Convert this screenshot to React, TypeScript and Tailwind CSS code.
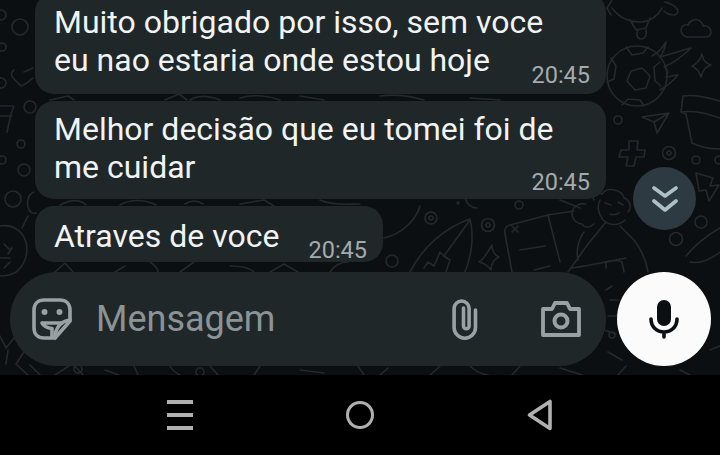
import React from 'react';

const font = { fontFamily: 'Roboto, "Noto Sans", sans-serif' };

const Doodles: React.FC = () => (
    <svg
        className="absolute inset-0"
        width="720"
        height="375"
        fill="none"
        stroke="#25292c"
        strokeWidth="1.6"
        strokeLinecap="round"
        strokeLinejoin="round"
    >
        {/* football + flames */}
        <circle cx="637" cy="76" r="30" />
        <path d="M631 71l11-3 8 8-4 12-11 2-8-9zM626 47l6 8 11-2 5-6M611 58l5 8-2 13-7 3M660 62l-6 5 1 14 6 5M622 105l6-6 12 1 4 6" />
        <path d="M652 56c6-3 11-9 14-14-1 6-3 11-6 15 8-2 20-6 31-9-8 8-18 15-27 19 4 2 4 6 2 10 4 0 8-2 12-2-5 6-11 11-18 15" />
        {/* cloud, star */}
        <path d="M688 37c-4 0-7-3-7-7s4-6 7-5c2-5 8-7 12-4 2 2 3 4 3 5 4-1 8 2 8 6s-3 5-6 5z" />
        <path d="M702 54c1 6 3 9 9 11-6 2-8 5-10 12-2-6-4-9-9-11 5-2 8-6 10-12z" />
        {/* turtle */}
        <path d="M612 8c6 8 16 14 28 14 10 0 18-6 22-14M630 20l6 10 10-2 4-10M638 30c-2 4-1 9 3 9s6-4 5-9M665 2c5 1 9 3 12 7 2 3 0 6-3 6-4 0-8-2-10-4M612 0l-5 8 4 7" />
        {/* pot */}
        <path d="M683 96c12-2 26 2 37 5M681 112c14-2 27 2 39 6M683 96l-2 16 5 2 6 29c8 4 18 6 28 6" />
        {/* plane */}
        <path d="M642 117l27-4-12 20-3-11zM654 122l15-9" />
        <circle cx="618" cy="120" r="4" />
        {/* cross */}
        <path d="M629 141h9l-1 9h8l-1 7h-8l-2 9h-8l2-9h-9l2-7h8z" />
        <circle cx="669" cy="153" r="6.5" />
        <circle cx="669" cy="153" r="2" />
        <circle cx="696" cy="160" r="4" />
        <circle cx="719" cy="160" r="4" />
        {/* lightning */}
        <path d="M696 173l17 5-3 8 9-1-10 16-3-11-7 1z" />
        <circle cx="701" cy="222" r="6" />
        <circle cx="676" cy="239" r="6.5" />
        <path d="M686 256c8-10 20-20 34-28M690 262c10 2 20-2 30-10" />
        {/* kid */}
        <path d="M594 200c-3-4 2-10 8-6 6-8 20-4 22 4 6 2 8 10 4 14M600 200c-3 6-2 14 3 20 6 6 16 6 22 0M586 204c-8-2-14 4-14 10s6 10 10 10c2 4 8 4 12 0M606 222l-18 22-20 28M620 226l14 14M584 232c-6 8-8 20-6 28M572 268c14-2 34-6 54-10M606 268v-6c4-2 12-2 16 0l2 10M634 240c6 8 12 18 14 32" />
        <path d="M605 203l6 2M618 202l5 3M610 214c3 1 6 1 9-1" />
        {/* tablet */}
        <path d="M512 272l-7-38c-1-5 1-8 5-9l38-10 26-4M548 215l12 47M512 226l6 6M518 226l-6 6M520 250l25-4M534 270l16-4" />
        {/* surfboard */}
        <path d="M410 272c12-24 34-44 60-53 4 16 2 36-5 53M470 220l-26 36-4-4-6 14-6-4-4 6M444 256l6 4-4 12" />
        <circle cx="431" cy="218" r="6" />
        <circle cx="431" cy="218" r="2" />
        <circle cx="488" cy="225" r="6.5" />
        <circle cx="488" cy="225" r="2" />
        <circle cx="519" cy="205" r="4" />
        <circle cx="392" cy="261" r="6" />
        <path d="M492 245c0 6 2 10 7 12-5 2-8 6-8 13-3-4-7-7-12-8 5-3 9-10 13-17z" />
        <path d="M420 206c-4 14-18 28-36 32M465 198c2 6 6 10 12 10" />
        <circle cx="458" cy="203" r="1" />
        {/* left column */}
        <circle cx="20" cy="27" r="8" />
        <circle cx="1" cy="15" r="5" />
        <circle cx="2" cy="47" r="4" />
        <path d="M14 70c-4 3-3 6 0 9l7 7c4-1 7-4 12-8M24 72l9-4" />
        <circle cx="1" cy="83" r="5" />
        <path d="M0 106h14l-3 8-4 18M0 116h12" />
        <circle cx="30" cy="107" r="6" />
        <circle cx="21" cy="144" r="4" />
        <circle cx="2" cy="160" r="4" />
        <circle cx="24" cy="170" r="6" />
        <circle cx="13" cy="199" r="8" />
        <path d="M34 192c-6 2-8 10-5 18 2 3 5 4 7 3M28 216l-6 12" />
        <path d="M0 226c12-2 22 4 26 16 3 12-2 24-10 30-6 4-12 4-16 4" />
        <path d="M4 244l6 6M0 258h10M4 268l6-6M12 248l-4 6" />
        <path d="M0 336l6 12 8-10M8 350l-2 14M24 352l-8 12 12 11M40 375l-10-10" />
        {/* gaps between bubbles */}
        <path d="M50 100l18-4 6 4M165 100l14-6 8 6M190 100c10-6 20-4 30 0M240 98c14-4 30-2 40 2M300 96l24 4M380 96c14-2 30 0 44 4M470 98l30 2" />
        <path d="M60 205c10-5 20-6 26 0M120 205c10-6 24-6 36 0M185 204c6-4 12-4 18 0M240 204l24-4 10 6M320 200c12 6 30 4 40 4M560 200l20 8" />
        {/* strip above the input */}
        <path d="M55 272l10-9 8 9M125 266l-10 6M150 262c8 6 8 8 8 10M180 272l14-10M230 266c10 0 20 2 24 6M270 272l14-8 14 8M330 272c4-6 10-10 18-10" />
        {/* strip under the input */}
        <path d="M55 375l14-9M75 366l8 9M105 370l14 5M134 366l4 9M170 366c2 4 4 6 10 9M210 366l8 9M260 366l-6 9M300 370l24 3M358 366l6 9M388 368l-8 7M440 366l-10 9M470 366c4 4 10 8 18 9M520 366l-8 9M560 368l22 7" />
        <circle cx="78" cy="369" r="4" />
        <circle cx="200" cy="372" r="4" />
        {/* around the mic button */}
        <path d="M606 290l6-4M610 300h8M608 316h10M604 330l12 4M608 352l14 8M626 366l-8 9M680 370l10 5M710 350l10-4" />
        <circle cx="612" cy="335" r="3" />
    </svg>
);

type BubbleProps = {
    lines: string[];
    width: string;
    className: string;
    timeClass: string;
};

const Bubble: React.FC<BubbleProps> = ({ lines, width, className, timeClass }) => (
    <div className={`${width} ${className} ml-[35px] flex flex-col bg-[#1f2729] rounded-[19px] pl-[19px] pr-[16px] text-[32px] leading-[38px] text-[#f1f3f4]`}>
        {lines.slice(0, -1).map((line) => (
            <div key={line} className="whitespace-nowrap">{line}</div>
        ))}
        <div className="flex justify-between items-end">
            <span className="whitespace-nowrap">{lines[lines.length - 1]}</span>
            <span className={`${timeClass} text-[23.5px] leading-[26px] text-[#a4abae] whitespace-nowrap`}>20:45</span>
        </div>
    </div>
);

export default function App() {
    return (
        <div className="w-[720px] h-[455px] flex flex-col overflow-hidden bg-black" style={font}>
            <div className="relative h-[375px] bg-[#0b0f12] flex flex-col justify-end overflow-hidden">
                <Doodles />
                <div className="relative flex flex-col">
                    <Bubble
                        width="w-[571px]"
                        className="pt-[10px] pb-[15px]"
                        timeClass="-mb-[9px]"
                        lines={['Muito obrigado por isso, sem voce', 'eu nao estaria onde estou hoje']}
                    />
                    <Bubble
                        width="w-[571px]"
                        className="mt-[7px] pt-[9px] pb-[13px]"
                        timeClass="-mb-[9px]"
                        lines={['Melhor decisão que eu tomei foi de', 'me cuidar']}
                    />
                    <Bubble
                        width="w-[348px]"
                        className="mt-[7px] pt-[11px] pb-[7px]"
                        timeClass="-mb-[8px]"
                        lines={['Atraves de voce']}
                    />
                    <div className="mt-[10px] mb-[9px] pl-[10px] pr-[9px] flex items-center gap-[11px]">
                        <div className="w-[596px] h-[94px] bg-[#1f2729] rounded-[47px] flex items-center pl-[22px] pr-[25px]">
                            <svg width="40" height="42" viewBox="0 0 40 42" fill="none" stroke="#9aa1a4" strokeWidth="3.6" strokeLinejoin="round" strokeLinecap="round">
                                <path d="M12 2h16c6 0 10 4 10 10v11L23 40H12C6 40 2 36 2 30V12C2 6 6 2 12 2z" />
                                <path d="M38 22c-9 1-15 8-15 18" />
                                <path d="M10 25h20M10 25c2 4 6 5 10 5.500V38" />
                                <circle cx="12.500" cy="14" r="3" fill="#9aa1a4" stroke="none" />
                                <circle cx="27.500" cy="14" r="3" fill="#9aa1a4" stroke="none" />
                            </svg>
                            <span className="ml-[24px] text-[36px] leading-none text-[#8b9396] flex-1">Mensagem</span>
                            <svg width="26" height="41" viewBox="0 0 26 41" fill="none" stroke="#9aa1a4" strokeWidth="3.6" strokeLinecap="round" className="mr-[63px]">
                                <path d="M23.500 11v17.500a10.700 10.700 0 0 1-21.400 0V9.500a7.500 7.500 0 0 1 15 0V27a2.800 2.800 0 0 1-5.600 0V9" />
                            </svg>
                            <svg width="40" height="36" viewBox="0 0 40 36" fill="none" stroke="#9aa1a4" strokeWidth="3.8" strokeLinejoin="round">
                                <path d="M2 8h9l3-6h12l3 6h9v26H2z" />
                                <circle cx="20" cy="20" r="6.500" strokeWidth="4" />
                            </svg>
                        </div>
                        <div className="w-[94px] h-[94px] rounded-full bg-[#fbfbfb] flex items-center justify-center shrink-0">
                            <svg width="30" height="40" viewBox="0 0 30 40" fill="none">
                                <rect x="8" y="1" width="14" height="26" rx="7" fill="#0b0f12" />
                                <path d="M2 20c0 8 6 13 13 13s13-5 13-13M15 33v5" stroke="#0b0f12" strokeWidth="3.600" strokeLinecap="round" />
                            </svg>
                        </div>
                    </div>
                </div>
                <div className="absolute left-[633px] top-[167px] w-[63px] h-[63px] rounded-full bg-[#2d3a41] flex items-center justify-center">
                    <svg width="26" height="28" viewBox="0 0 26 28" fill="none" stroke="#aebfc6" strokeWidth="3.600" strokeLinecap="round" strokeLinejoin="round">
                        <path d="M2 3l11 8 11-8M2 16l11 9 11-9" />
                    </svg>
                </div>
            </div>
            <div className="flex-1 bg-black grid grid-cols-3 px-[90px] items-center justify-items-center">
                <div className="flex flex-col gap-[9px]">
                    <div className="w-[26px] h-[4px] bg-[#b0b0b0]" />
                    <div className="w-[26px] h-[4px] bg-[#b0b0b0]" />
                    <div className="w-[26px] h-[4px] bg-[#b0b0b0]" />
                </div>
                <div className="w-[28px] h-[28px] rounded-full border-[3.5px] border-[#b0b0b0]" />
                <svg width="26" height="32" viewBox="0 0 26 32" fill="none" stroke="#b0b0b0" strokeWidth="3.600" strokeLinejoin="round">
                    <path d="M23 2.500v27L2.500 16z" />
                </svg>
            </div>
        </div>
    );
}
